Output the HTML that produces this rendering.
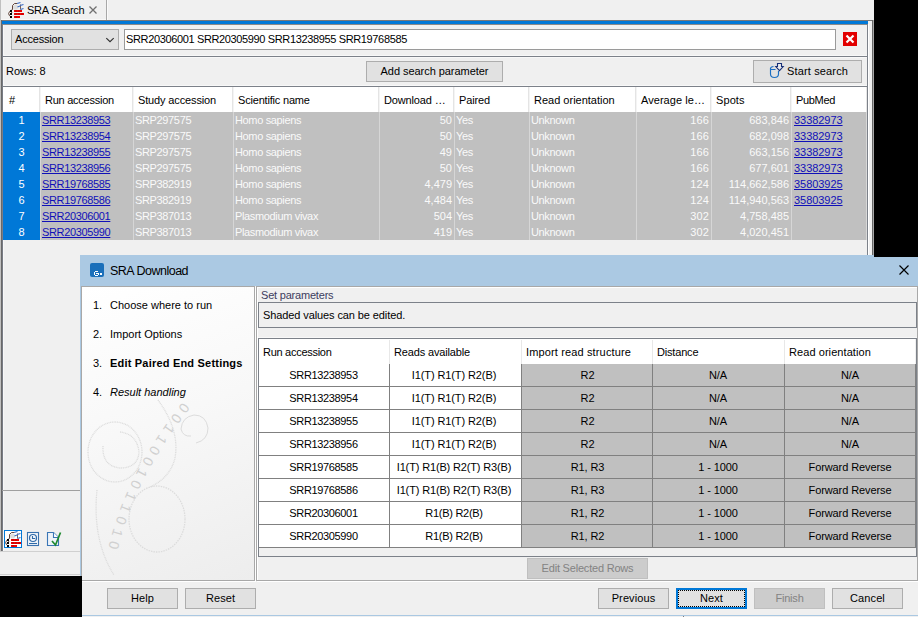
<!DOCTYPE html>
<html><head><meta charset="utf-8">
<style>
*{box-sizing:border-box;margin:0;padding:0}
html,body{width:918px;height:617px;overflow:hidden;background:#f0f0f0;font-family:"Liberation Sans",sans-serif;font-size:11px;color:#000;position:relative}
.a{position:absolute}
.t{position:absolute;white-space:nowrap;line-height:14px}
</style></head><body>
<div class="a" style="left:874px;top:0px;width:44px;height:257px;background:#000;"></div>
<div class="a" style="left:0px;top:576px;width:82px;height:41px;background:#000;"></div>
<div class="a" style="left:683px;top:616px;width:1px;height:1px;background:#808080;"></div>
<div class="a" style="left:0px;top:0px;width:1px;height:551px;background:#c0c0c0;"></div>
<div class="a" style="left:106px;top:0px;width:1px;height:20px;background:#a8a8a8;"></div>
<div class="a" style="left:107px;top:0px;width:1px;height:20px;background:#fafafa;"></div>
<div class="a" style="left:1px;top:19px;width:105px;height:1px;background:#f8f8f8;"></div>
<svg class="a" style="left:0px;top:0px" width="30" height="20" viewBox="0 0 30 20">
<circle cx="15.5" cy="7" r="2.6" fill="#dedede"/>
<path d="M12.5 9.5 Q9.2 11 8.6 13.4 Q8.8 15.6 10.6 16.6 M12.5 9.5 L12.5 5.5 L14.5 3.5 L17 3.5 M12.2 12 Q11 13.5 9.8 14.2" stroke="#5a3b30" stroke-width="0.95" fill="none"/>
<path d="M20.5 4.5 L20.5 9.5" stroke="#5a3b30" stroke-width="0.8"/>
<path d="M17 3.5 L20.5 2.5 M17.5 7 L20 6 M20 5.5 L23.5 4.5 M20.5 9.5 L23.5 8.5" stroke="#3b6cc4" stroke-width="1.2" fill="none"/>
<rect x="10" y="10" width="2" height="2" fill="#000"/><rect x="10" y="13" width="2" height="2" fill="#000"/><rect x="10" y="16" width="2" height="2" fill="#000"/>
<rect x="14" y="10" width="8" height="2" fill="#f00000"/><rect x="14" y="13" width="10" height="2" fill="#f00000"/><rect x="14" y="16" width="6" height="2" fill="#f00000"/>
<path d="M16 10 v2 M19 10 v2 M16 13 v2 M19 13 v2 M22 13 v2 M16 16 v2" stroke="#b00000" stroke-width="1"/>
</svg>
<div class="t" style="left:27px;top:3px;letter-spacing:-0.25px;">SRA Search</div>
<svg class="a" style="left:89px;top:6px" width="8" height="8" viewBox="0 0 8 8"><path d="M0.5 0.5 L7.5 7.5 M7.5 0.5 L0.5 7.5" stroke="#707070" stroke-width="1.3"/></svg>
<div class="a" style="left:1px;top:20px;width:873px;height:1px;background:#787878;"></div>
<div class="a" style="left:2px;top:21px;width:866px;height:3px;background:#0078d7;"></div>
<div class="a" style="left:1px;top:24px;width:867px;height:1px;background:#8a8a8a;"></div>
<div class="a" style="left:1px;top:20px;width:1px;height:531px;background:#696969;"></div>
<div class="a" style="left:2px;top:24px;width:1px;height:527px;background:#787c85;"></div>
<div class="a" style="left:3px;top:25px;width:1px;height:526px;background:#f8f8f8;"></div>
<div class="a" style="left:867px;top:24px;width:1px;height:232px;background:#7c8189;"></div>
<div class="a" style="left:868px;top:21px;width:4px;height:555px;background:#f0f0f0;"></div>
<div class="a" style="left:868px;top:24px;width:1px;height:552px;background:#ffffff;"></div>
<div class="a" style="left:872px;top:20px;width:1px;height:556px;background:#696969;"></div>
<div class="a" style="left:873px;top:20px;width:1px;height:556px;background:#a8a8a8;"></div>
<div class="a" style="left:11px;top:29px;width:108px;height:21px;border:1px solid #adadad;background:#e1e1e1;"></div>
<div class="t" style="left:15px;top:32px;letter-spacing:-0.2px;">Accession</div>
<svg class="a" style="left:105px;top:37px" width="10" height="6" viewBox="0 0 10 6"><path d="M1.3 1.2 L5 4.7 L8.7 1.2" stroke="#303030" stroke-width="1.15" fill="none"/></svg>
<div class="a" style="left:124px;top:29px;width:712px;height:21px;border:1px solid #9a9a9a;background:#fff;"></div>
<div class="t" style="left:126px;top:32px;letter-spacing:-0.36px;">SRR20306001 SRR20305990 SRR13238955 SRR19768585</div>
<div class="a" style="left:843px;top:32px;width:14px;height:14px;background:#e20000;"></div>
<svg class="a" style="left:843px;top:32px" width="14" height="14" viewBox="0 0 14 14"><path d="M3.5 3.5 L10.5 10.5 M10.5 3.5 L3.5 10.5" stroke="#fff" stroke-width="2.2"/></svg>
<div class="a" style="left:3px;top:55px;width:864px;height:1px;background:#f8f8f8;"></div>
<div class="a" style="left:3px;top:56px;width:865px;height:1px;background:#7c8189;"></div>
<div class="a" style="left:3px;top:57px;width:864px;height:1px;background:#f8f8f8;"></div>
<div class="t" style="left:6px;top:64px;">Rows: 8</div>
<div class="a" style="left:366px;top:61px;width:137px;height:21px;border:1px solid #adadad;background:#e1e1e1;"></div>
<div class="t" style="left:366px;top:64px;width:137px;text-align:center;letter-spacing:-0.05px;">Add search parameter</div>
<div class="a" style="left:753px;top:60px;width:109px;height:23px;border:1px solid #adadad;background:#e1e1e1;"></div>
<svg class="a" style="left:768px;top:62px" width="17" height="17" viewBox="0 0 17 17">
<path d="M2.5 6 V12 Q2.5 15.5 6.5 15.5 Q10.5 15.5 10.5 12 V9" stroke="#1b6ec2" stroke-width="1.15" fill="none"/>
<path d="M2.5 6.5 Q2.8 4.6 5.5 4.5 M3 7.5 L7.5 7.5" stroke="#1b6ec2" stroke-width="1.1" fill="none"/>
<path d="M9.5 1.5 H13.5 V4.5 H15.2 L11.5 8.6 L7.8 4.5 H9.5 Z" stroke="#162f78" stroke-width="1.1" fill="#ececec" stroke-linejoin="miter"/>
</svg>
<div class="t" style="left:787px;top:64px;letter-spacing:0.15px;">Start search</div>
<div class="a" style="left:3px;top:85px;width:864px;height:1px;background:#f8f8f8;"></div>
<div class="a" style="left:2px;top:86px;width:866px;height:1px;background:#7c8189;"></div>
<div class="a" style="left:3px;top:87px;width:864px;height:25px;background:#fff;"></div>
<div class="t" style="left:9px;top:93px;letter-spacing:0px;">#</div>
<div class="t" style="left:45px;top:93px;letter-spacing:-0.25px;">Run accession</div>
<div class="a" style="left:39px;top:87px;width:1px;height:25px;background:#e4e4e4;"></div>
<div class="a" style="left:40px;top:87px;width:1px;height:25px;background:#f4f4f4;"></div>
<div class="t" style="left:138px;top:93px;letter-spacing:-0.14px;">Study accession</div>
<div class="a" style="left:132px;top:87px;width:1px;height:25px;background:#e4e4e4;"></div>
<div class="a" style="left:133px;top:87px;width:1px;height:25px;background:#f4f4f4;"></div>
<div class="t" style="left:238px;top:93px;letter-spacing:-0.19px;">Scientific name</div>
<div class="a" style="left:232px;top:87px;width:1px;height:25px;background:#e4e4e4;"></div>
<div class="a" style="left:233px;top:87px;width:1px;height:25px;background:#f4f4f4;"></div>
<div class="t" style="left:384px;top:93px;letter-spacing:-0.14px;">Download &#8230;</div>
<div class="a" style="left:378px;top:87px;width:1px;height:25px;background:#e4e4e4;"></div>
<div class="a" style="left:379px;top:87px;width:1px;height:25px;background:#f4f4f4;"></div>
<div class="t" style="left:459px;top:93px;letter-spacing:-0.13px;">Paired</div>
<div class="a" style="left:453px;top:87px;width:1px;height:25px;background:#e4e4e4;"></div>
<div class="a" style="left:454px;top:87px;width:1px;height:25px;background:#f4f4f4;"></div>
<div class="t" style="left:534px;top:93px;letter-spacing:0px;">Read orientation</div>
<div class="a" style="left:528px;top:87px;width:1px;height:25px;background:#e4e4e4;"></div>
<div class="a" style="left:529px;top:87px;width:1px;height:25px;background:#f4f4f4;"></div>
<div class="t" style="left:641px;top:93px;letter-spacing:0.05px;">Average le&#8230;</div>
<div class="a" style="left:635px;top:87px;width:1px;height:25px;background:#e4e4e4;"></div>
<div class="a" style="left:636px;top:87px;width:1px;height:25px;background:#f4f4f4;"></div>
<div class="t" style="left:716px;top:93px;letter-spacing:0.1px;">Spots</div>
<div class="a" style="left:710px;top:87px;width:1px;height:25px;background:#e4e4e4;"></div>
<div class="a" style="left:711px;top:87px;width:1px;height:25px;background:#f4f4f4;"></div>
<div class="t" style="left:796px;top:93px;letter-spacing:-0.33px;">PubMed</div>
<div class="a" style="left:790px;top:87px;width:1px;height:25px;background:#e4e4e4;"></div>
<div class="a" style="left:791px;top:87px;width:1px;height:25px;background:#f4f4f4;"></div>
<div class="a" style="left:866px;top:87px;width:1px;height:25px;background:#e6e6e6;"></div>
<div class="a" style="left:3px;top:112px;width:37px;height:128px;background:#0078d7;"></div>
<div class="a" style="left:40px;top:112px;width:827px;height:128px;background:#c0c0c0;"></div>
<div class="a" style="left:866px;top:112px;width:1px;height:128px;background:#d8d8d8;"></div>
<div class="a" style="left:40px;top:112px;width:1px;height:128px;background:#d6d6d6;"></div>
<div class="a" style="left:133px;top:112px;width:1px;height:128px;background:#d6d6d6;"></div>
<div class="a" style="left:233px;top:112px;width:1px;height:128px;background:#d6d6d6;"></div>
<div class="a" style="left:379px;top:112px;width:1px;height:128px;background:#d6d6d6;"></div>
<div class="a" style="left:454px;top:112px;width:1px;height:128px;background:#d6d6d6;"></div>
<div class="a" style="left:529px;top:112px;width:1px;height:128px;background:#d6d6d6;"></div>
<div class="a" style="left:636px;top:112px;width:1px;height:128px;background:#d6d6d6;"></div>
<div class="a" style="left:711px;top:112px;width:1px;height:128px;background:#d6d6d6;"></div>
<div class="a" style="left:791px;top:112px;width:1px;height:128px;background:#d6d6d6;"></div>
<div class="t" style="left:3px;top:113px;width:37px;text-align:center;color:#fff;">1</div>
<div class="t" style="left:42px;top:113px;letter-spacing:-0.35px;color:#1010b8;text-decoration:underline;">SRR13238953</div>
<div class="t" style="left:135px;top:113px;letter-spacing:-0.35px;color:#fafafa;">SRP297575</div>
<div class="t" style="left:235px;top:113px;letter-spacing:-0.35px;color:#fafafa;">Homo sapiens</div>
<div class="t" style="left:379px;top:113px;width:73px;text-align:right;letter-spacing:0.0px;color:#fafafa;">50</div>
<div class="t" style="left:456px;top:113px;letter-spacing:-0.35px;color:#fafafa;">Yes</div>
<div class="t" style="left:531px;top:113px;letter-spacing:-0.35px;color:#fafafa;">Unknown</div>
<div class="t" style="left:636px;top:113px;width:73px;text-align:right;letter-spacing:0.15px;color:#fafafa;">166</div>
<div class="t" style="left:711px;top:113px;width:78px;text-align:right;letter-spacing:0.0px;color:#fafafa;">683,846</div>
<div class="t" style="left:794px;top:113px;letter-spacing:-0.05px;color:#1010b8;text-decoration:underline;">33382973</div>
<div class="t" style="left:3px;top:129px;width:37px;text-align:center;color:#fff;">2</div>
<div class="t" style="left:42px;top:129px;letter-spacing:-0.35px;color:#1010b8;text-decoration:underline;">SRR13238954</div>
<div class="t" style="left:135px;top:129px;letter-spacing:-0.35px;color:#fafafa;">SRP297575</div>
<div class="t" style="left:235px;top:129px;letter-spacing:-0.35px;color:#fafafa;">Homo sapiens</div>
<div class="t" style="left:379px;top:129px;width:73px;text-align:right;letter-spacing:0.0px;color:#fafafa;">50</div>
<div class="t" style="left:456px;top:129px;letter-spacing:-0.35px;color:#fafafa;">Yes</div>
<div class="t" style="left:531px;top:129px;letter-spacing:-0.35px;color:#fafafa;">Unknown</div>
<div class="t" style="left:636px;top:129px;width:73px;text-align:right;letter-spacing:0.15px;color:#fafafa;">166</div>
<div class="t" style="left:711px;top:129px;width:78px;text-align:right;letter-spacing:0.0px;color:#fafafa;">682,098</div>
<div class="t" style="left:794px;top:129px;letter-spacing:-0.05px;color:#1010b8;text-decoration:underline;">33382973</div>
<div class="t" style="left:3px;top:145px;width:37px;text-align:center;color:#fff;">3</div>
<div class="t" style="left:42px;top:145px;letter-spacing:-0.35px;color:#1010b8;text-decoration:underline;">SRR13238955</div>
<div class="t" style="left:135px;top:145px;letter-spacing:-0.35px;color:#fafafa;">SRP297575</div>
<div class="t" style="left:235px;top:145px;letter-spacing:-0.35px;color:#fafafa;">Homo sapiens</div>
<div class="t" style="left:379px;top:145px;width:73px;text-align:right;letter-spacing:0.0px;color:#fafafa;">49</div>
<div class="t" style="left:456px;top:145px;letter-spacing:-0.35px;color:#fafafa;">Yes</div>
<div class="t" style="left:531px;top:145px;letter-spacing:-0.35px;color:#fafafa;">Unknown</div>
<div class="t" style="left:636px;top:145px;width:73px;text-align:right;letter-spacing:0.15px;color:#fafafa;">166</div>
<div class="t" style="left:711px;top:145px;width:78px;text-align:right;letter-spacing:0.0px;color:#fafafa;">663,156</div>
<div class="t" style="left:794px;top:145px;letter-spacing:-0.05px;color:#1010b8;text-decoration:underline;">33382973</div>
<div class="t" style="left:3px;top:161px;width:37px;text-align:center;color:#fff;">4</div>
<div class="t" style="left:42px;top:161px;letter-spacing:-0.35px;color:#1010b8;text-decoration:underline;">SRR13238956</div>
<div class="t" style="left:135px;top:161px;letter-spacing:-0.35px;color:#fafafa;">SRP297575</div>
<div class="t" style="left:235px;top:161px;letter-spacing:-0.35px;color:#fafafa;">Homo sapiens</div>
<div class="t" style="left:379px;top:161px;width:73px;text-align:right;letter-spacing:0.0px;color:#fafafa;">50</div>
<div class="t" style="left:456px;top:161px;letter-spacing:-0.35px;color:#fafafa;">Yes</div>
<div class="t" style="left:531px;top:161px;letter-spacing:-0.35px;color:#fafafa;">Unknown</div>
<div class="t" style="left:636px;top:161px;width:73px;text-align:right;letter-spacing:0.15px;color:#fafafa;">166</div>
<div class="t" style="left:711px;top:161px;width:78px;text-align:right;letter-spacing:0.0px;color:#fafafa;">677,601</div>
<div class="t" style="left:794px;top:161px;letter-spacing:-0.05px;color:#1010b8;text-decoration:underline;">33382973</div>
<div class="t" style="left:3px;top:177px;width:37px;text-align:center;color:#fff;">5</div>
<div class="t" style="left:42px;top:177px;letter-spacing:-0.35px;color:#1010b8;text-decoration:underline;">SRR19768585</div>
<div class="t" style="left:135px;top:177px;letter-spacing:-0.35px;color:#fafafa;">SRP382919</div>
<div class="t" style="left:235px;top:177px;letter-spacing:-0.35px;color:#fafafa;">Homo sapiens</div>
<div class="t" style="left:379px;top:177px;width:73px;text-align:right;letter-spacing:0.0px;color:#fafafa;">4,479</div>
<div class="t" style="left:456px;top:177px;letter-spacing:-0.35px;color:#fafafa;">Yes</div>
<div class="t" style="left:531px;top:177px;letter-spacing:-0.35px;color:#fafafa;">Unknown</div>
<div class="t" style="left:636px;top:177px;width:73px;text-align:right;letter-spacing:0.15px;color:#fafafa;">124</div>
<div class="t" style="left:711px;top:177px;width:78px;text-align:right;letter-spacing:0.0px;color:#fafafa;">114,662,586</div>
<div class="t" style="left:794px;top:177px;letter-spacing:-0.05px;color:#1010b8;text-decoration:underline;">35803925</div>
<div class="t" style="left:3px;top:193px;width:37px;text-align:center;color:#fff;">6</div>
<div class="t" style="left:42px;top:193px;letter-spacing:-0.35px;color:#1010b8;text-decoration:underline;">SRR19768586</div>
<div class="t" style="left:135px;top:193px;letter-spacing:-0.35px;color:#fafafa;">SRP382919</div>
<div class="t" style="left:235px;top:193px;letter-spacing:-0.35px;color:#fafafa;">Homo sapiens</div>
<div class="t" style="left:379px;top:193px;width:73px;text-align:right;letter-spacing:0.0px;color:#fafafa;">4,484</div>
<div class="t" style="left:456px;top:193px;letter-spacing:-0.35px;color:#fafafa;">Yes</div>
<div class="t" style="left:531px;top:193px;letter-spacing:-0.35px;color:#fafafa;">Unknown</div>
<div class="t" style="left:636px;top:193px;width:73px;text-align:right;letter-spacing:0.15px;color:#fafafa;">124</div>
<div class="t" style="left:711px;top:193px;width:78px;text-align:right;letter-spacing:0.0px;color:#fafafa;">114,940,563</div>
<div class="t" style="left:794px;top:193px;letter-spacing:-0.05px;color:#1010b8;text-decoration:underline;">35803925</div>
<div class="t" style="left:3px;top:209px;width:37px;text-align:center;color:#fff;">7</div>
<div class="t" style="left:42px;top:209px;letter-spacing:-0.35px;color:#1010b8;text-decoration:underline;">SRR20306001</div>
<div class="t" style="left:135px;top:209px;letter-spacing:-0.35px;color:#fafafa;">SRP387013</div>
<div class="t" style="left:235px;top:209px;letter-spacing:-0.35px;color:#fafafa;">Plasmodium vivax</div>
<div class="t" style="left:379px;top:209px;width:73px;text-align:right;letter-spacing:0.0px;color:#fafafa;">504</div>
<div class="t" style="left:456px;top:209px;letter-spacing:-0.35px;color:#fafafa;">Yes</div>
<div class="t" style="left:531px;top:209px;letter-spacing:-0.35px;color:#fafafa;">Unknown</div>
<div class="t" style="left:636px;top:209px;width:73px;text-align:right;letter-spacing:0.15px;color:#fafafa;">302</div>
<div class="t" style="left:711px;top:209px;width:78px;text-align:right;letter-spacing:0.0px;color:#fafafa;">4,758,485</div>
<div class="t" style="left:3px;top:225px;width:37px;text-align:center;color:#fff;">8</div>
<div class="t" style="left:42px;top:225px;letter-spacing:-0.35px;color:#1010b8;text-decoration:underline;">SRR20305990</div>
<div class="t" style="left:135px;top:225px;letter-spacing:-0.35px;color:#fafafa;">SRP387013</div>
<div class="t" style="left:235px;top:225px;letter-spacing:-0.35px;color:#fafafa;">Plasmodium vivax</div>
<div class="t" style="left:379px;top:225px;width:73px;text-align:right;letter-spacing:0.0px;color:#fafafa;">419</div>
<div class="t" style="left:456px;top:225px;letter-spacing:-0.35px;color:#fafafa;">Yes</div>
<div class="t" style="left:531px;top:225px;letter-spacing:-0.35px;color:#fafafa;">Unknown</div>
<div class="t" style="left:636px;top:225px;width:73px;text-align:right;letter-spacing:0.15px;color:#fafafa;">302</div>
<div class="t" style="left:711px;top:225px;width:78px;text-align:right;letter-spacing:0.0px;color:#fafafa;">4,020,451</div>
<div class="a" style="left:2px;top:490px;width:866px;height:1px;background:#a0a0a0;"></div>
<div class="a" style="left:0px;top:551px;width:80px;height:1px;background:#d0d0d0;"></div>
<div class="a" style="left:0px;top:574px;width:80px;height:1px;background:#d0d0d0;"></div>
<div class="a" style="left:4px;top:530px;width:18px;height:18px;background:#0078d7;"></div>
<div class="a" style="left:5px;top:531px;width:16px;height:16px;background:#ffffff;"></div>
<svg class="a" style="left:-3px;top:529px" width="30" height="20" viewBox="0 0 30 20">
<circle cx="15.5" cy="7" r="2.6" fill="#dedede"/>
<path d="M12.5 9.5 Q9.2 11 8.6 13.4 Q8.8 15.6 10.6 16.6 M12.5 9.5 L12.5 5.5 L14.5 3.5 L17 3.5 M12.2 12 Q11 13.5 9.8 14.2" stroke="#5a3b30" stroke-width="0.95" fill="none"/>
<path d="M20.5 4.5 L20.5 9.5" stroke="#5a3b30" stroke-width="0.8"/>
<path d="M17 3.5 L20.5 2.5 M17.5 7 L20 6 M20 5.5 L23.5 4.5 M20.5 9.5 L23.5 8.5" stroke="#3b6cc4" stroke-width="1.2" fill="none"/>
<rect x="10" y="10" width="2" height="2" fill="#000"/><rect x="10" y="13" width="2" height="2" fill="#000"/><rect x="10" y="16" width="2" height="2" fill="#000"/>
<rect x="14" y="10" width="8" height="2" fill="#f00000"/><rect x="14" y="13" width="10" height="2" fill="#f00000"/><rect x="14" y="16" width="6" height="2" fill="#f00000"/>
<path d="M16 10 v2 M19 10 v2 M16 13 v2 M19 13 v2 M22 13 v2 M16 16 v2" stroke="#b00000" stroke-width="1"/>
</svg>
<svg class="a" style="left:26px;top:531px" width="40" height="17" viewBox="26 531 40 17">
<rect x="27.5" y="532.5" width="11" height="13" fill="#f4f7fb" stroke="#3a72ae" stroke-width="1.1"/>
<circle cx="33" cy="538" r="3.5" fill="none" stroke="#2f6aa8" stroke-width="1.2"/>
<path d="M32.5 536 V538.5 H35.2" stroke="#2f6aa8" stroke-width="1.1" fill="none"/>
<path d="M29 543.5 H37" stroke="#2f6aa8" stroke-width="1.1"/>
<path d="M47.5 532.5 H53.5 L58.5 537.5 V545.5 H47.5 Z" fill="#eef3f9" stroke="#3a76b6" stroke-width="1.1"/>
<path d="M53.5 532.5 V537.5 H58.5" fill="#fff" stroke="#3a76b6" stroke-width="1.1"/>
<path d="M52 541 L55.5 545 L60.5 532.5" fill="none" stroke="#1f8a30" stroke-width="1.7"/>
</svg>
<div class="a" style="left:80px;top:255px;width:794px;height:362px;background:#f0f0f0;"></div>
<div class="a" style="left:80px;top:255px;width:794px;height:31px;background:#abc9e3;"></div>
<div class="a" style="left:874px;top:257px;width:44px;height:360px;background:#f0f0f0;"></div>
<div class="a" style="left:874px;top:257px;width:44px;height:29px;background:#abc9e3;"></div>
<div class="a" style="left:80px;top:286px;width:1px;height:331px;background:#aac8e2;"></div>
<div class="a" style="left:90px;top:263px;width:14px;height:14px;background:#1a6fba;border-radius:2px"></div>
<svg class="a" style="left:90px;top:263px" width="14" height="14" viewBox="0 0 14 14" shape-rendering="crispEdges" fill="#fff"><rect x="4" y="9" width="1" height="3"/><rect x="5" y="8" width="3" height="1"/><rect x="5" y="12" width="3" height="1"/><rect x="8" y="10" width="1" height="2"/><rect x="6" y="10" width="2" height="1"/><rect x="10" y="10" width="2" height="2"/></svg>
<div class="t" style="left:110px;top:264px;letter-spacing:-0.5px;font-size:12.5px;">SRA Download</div>
<svg class="a" style="left:899px;top:265px" width="10" height="10" viewBox="0 0 10 10"><path d="M0.5 0.5 L9.5 9.5 M9.5 0.5 L0.5 9.5" stroke="#000" stroke-width="1.15"/></svg>
<div class="a" style="left:82px;top:287px;width:174px;height:295px;border:1px solid #fff"></div>
<div class="a" style="left:81px;top:286px;width:174px;height:295px;border:1px solid #a8a8a8;background:linear-gradient(160deg,#ffffff 0%,#f8f8f8 45%,#ededed 100%)"></div>
<svg class="a" style="left:82px;top:287px" width="172" height="293" viewBox="82 287 172 293">
<g fill="none" stroke="#dcdcdc" stroke-width="1.3" stroke-dasharray="1 0.7">
<ellipse cx="115" cy="452" rx="27" ry="30"/>
<path d="M103 446 Q102 466 120 468 Q138 468 139 452 Q137 434 120 432"/>
<path d="M158 400 Q180 430 175 458 Q170 478 150 487"/>
<path d="M97 490 Q92 540 114 575"/>
<ellipse cx="157" cy="519" rx="28" ry="33" stroke-dasharray="1.5 1"/>
</g>
<g fill="none" stroke="#dcdcdc" stroke-width="1">
<path d="M196 443 Q208 440 208 428 Q206 415 194 415 Q182 417 181 429 Q183 437 191 436"/>
</g>
<g font-family="Liberation Sans" font-size="14" fill="#d0d0d0"><text x="184.1" y="408.2" transform="rotate(127.2 184.1 408.2)" text-anchor="middle" dy="5">0</text><text x="176.4" y="418.5" transform="rotate(126.1 176.4 418.5)" text-anchor="middle" dy="5">0</text><text x="168.8" y="429.0" transform="rotate(124.8 168.8 429.0)" text-anchor="middle" dy="5">1</text><text x="161.6" y="439.7" transform="rotate(123.3 161.6 439.7)" text-anchor="middle" dy="5">1</text><text x="154.7" y="450.6" transform="rotate(121.6 154.7 450.6)" text-anchor="middle" dy="5">0</text><text x="148.1" y="461.7" transform="rotate(119.8 148.1 461.7)" text-anchor="middle" dy="5">0</text><text x="141.8" y="473.0" transform="rotate(117.8 141.8 473.0)" text-anchor="middle" dy="5">1</text><text x="136.0" y="484.6" transform="rotate(115.6 136.0 484.6)" text-anchor="middle" dy="5">0</text><text x="130.7" y="496.4" transform="rotate(113.4 130.7 496.4)" text-anchor="middle" dy="5">1</text><text x="125.8" y="508.3" transform="rotate(111.0 125.8 508.3)" text-anchor="middle" dy="5">1</text><text x="121.4" y="520.5" transform="rotate(108.6 121.4 520.5)" text-anchor="middle" dy="5">0</text><text x="117.5" y="532.8" transform="rotate(106.2 117.5 532.8)" text-anchor="middle" dy="5">1</text><text x="114.2" y="545.3" transform="rotate(103.7 114.2 545.3)" text-anchor="middle" dy="5">0</text></g>
</svg>
<div class="t" style="left:93px;top:298px;">1.</div>
<div class="t" style="left:110px;top:298px;">Choose where to run</div>
<div class="t" style="left:93px;top:327px;">2.</div>
<div class="t" style="left:110px;top:327px;">Import Options</div>
<div class="t" style="left:93px;top:356px;">3.</div>
<div class="t" style="left:110px;top:356px;letter-spacing:0.2px;font-weight:bold;">Edit Paired End Settings</div>
<div class="t" style="left:93px;top:385px;">4.</div>
<div class="t" style="left:110px;top:385px;font-style:italic;">Result handling</div>
<div class="a" style="left:257px;top:287px;width:662px;height:295px;border:1px solid #fff"></div>
<div class="a" style="left:256px;top:286px;width:662px;height:295px;border:1px solid #a8a8a8"></div>
<div class="t" style="left:261px;top:288px;letter-spacing:-0.2px;color:#3c3c5e;">Set parameters</div>
<div class="a" style="left:258px;top:302px;width:659px;height:26px;border:1px solid #7c8189;background:#f0f0f0;"></div>
<div class="t" style="left:263px;top:308px;letter-spacing:-0.1px;">Shaded values can be edited.</div>
<div class="a" style="left:258px;top:337px;width:659px;height:1px;background:#f8f8f8;"></div>
<div class="a" style="left:258px;top:338px;width:659px;height:219px;border:1px solid #7c8189;background:#f0f0f0;"></div>
<div class="a" style="left:259px;top:339px;width:656px;height:25px;background:#fff;"></div>
<div class="a" style="left:259px;top:364px;width:263px;height:184px;background:#fff;"></div>
<div class="a" style="left:522px;top:364px;width:393px;height:184px;background:#c0c0c0;"></div>
<div class="t" style="left:263px;top:345px;letter-spacing:-0.28px;">Run accession</div>
<div class="t" style="left:394px;top:345px;letter-spacing:-0.15px;">Reads available</div>
<div class="a" style="left:389px;top:340px;width:1px;height:24px;background:#e8e8e8;"></div>
<div class="a" style="left:389px;top:364px;width:1px;height:184px;background:#808080;"></div>
<div class="t" style="left:526px;top:345px;letter-spacing:0.14px;">Import read structure</div>
<div class="a" style="left:521px;top:340px;width:1px;height:24px;background:#e8e8e8;"></div>
<div class="a" style="left:521px;top:364px;width:1px;height:184px;background:#808080;"></div>
<div class="t" style="left:657px;top:345px;letter-spacing:-0.18px;">Distance</div>
<div class="a" style="left:652px;top:340px;width:1px;height:24px;background:#e8e8e8;"></div>
<div class="a" style="left:652px;top:364px;width:1px;height:184px;background:#808080;"></div>
<div class="t" style="left:789px;top:345px;letter-spacing:0.07px;">Read orientation</div>
<div class="a" style="left:784px;top:340px;width:1px;height:24px;background:#e8e8e8;"></div>
<div class="a" style="left:784px;top:364px;width:1px;height:184px;background:#808080;"></div>
<div class="a" style="left:259px;top:386px;width:656px;height:1px;background:#808080;"></div>
<div class="a" style="left:259px;top:409px;width:656px;height:1px;background:#808080;"></div>
<div class="a" style="left:259px;top:432px;width:656px;height:1px;background:#808080;"></div>
<div class="a" style="left:259px;top:455px;width:656px;height:1px;background:#808080;"></div>
<div class="a" style="left:259px;top:478px;width:656px;height:1px;background:#808080;"></div>
<div class="a" style="left:259px;top:501px;width:656px;height:1px;background:#808080;"></div>
<div class="a" style="left:259px;top:524px;width:656px;height:1px;background:#808080;"></div>
<div class="a" style="left:259px;top:547px;width:656px;height:1px;background:#808080;"></div>
<div class="a" style="left:915px;top:364px;width:1px;height:184px;background:#808080;"></div>
<div class="t" style="left:258px;top:368px;width:131px;text-align:center;letter-spacing:-0.35px;">SRR13238953</div>
<div class="t" style="left:388px;top:368px;width:132px;text-align:center;letter-spacing:-0.1px;">I1(T) R1(T) R2(B)</div>
<div class="t" style="left:522px;top:368px;width:131px;text-align:center;letter-spacing:-0.1px;">R2</div>
<div class="t" style="left:652px;top:368px;width:132px;text-align:center;letter-spacing:-0.1px;">N/A</div>
<div class="t" style="left:785px;top:368px;width:130px;text-align:center;letter-spacing:-0.1px;">N/A</div>
<div class="t" style="left:258px;top:391px;width:131px;text-align:center;letter-spacing:-0.35px;">SRR13238954</div>
<div class="t" style="left:388px;top:391px;width:132px;text-align:center;letter-spacing:-0.1px;">I1(T) R1(T) R2(B)</div>
<div class="t" style="left:522px;top:391px;width:131px;text-align:center;letter-spacing:-0.1px;">R2</div>
<div class="t" style="left:652px;top:391px;width:132px;text-align:center;letter-spacing:-0.1px;">N/A</div>
<div class="t" style="left:785px;top:391px;width:130px;text-align:center;letter-spacing:-0.1px;">N/A</div>
<div class="t" style="left:258px;top:414px;width:131px;text-align:center;letter-spacing:-0.35px;">SRR13238955</div>
<div class="t" style="left:388px;top:414px;width:132px;text-align:center;letter-spacing:-0.1px;">I1(T) R1(T) R2(B)</div>
<div class="t" style="left:522px;top:414px;width:131px;text-align:center;letter-spacing:-0.1px;">R2</div>
<div class="t" style="left:652px;top:414px;width:132px;text-align:center;letter-spacing:-0.1px;">N/A</div>
<div class="t" style="left:785px;top:414px;width:130px;text-align:center;letter-spacing:-0.1px;">N/A</div>
<div class="t" style="left:258px;top:437px;width:131px;text-align:center;letter-spacing:-0.35px;">SRR13238956</div>
<div class="t" style="left:388px;top:437px;width:132px;text-align:center;letter-spacing:-0.1px;">I1(T) R1(T) R2(B)</div>
<div class="t" style="left:522px;top:437px;width:131px;text-align:center;letter-spacing:-0.1px;">R2</div>
<div class="t" style="left:652px;top:437px;width:132px;text-align:center;letter-spacing:-0.1px;">N/A</div>
<div class="t" style="left:785px;top:437px;width:130px;text-align:center;letter-spacing:-0.1px;">N/A</div>
<div class="t" style="left:258px;top:460px;width:131px;text-align:center;letter-spacing:-0.35px;">SRR19768585</div>
<div class="t" style="left:388px;top:460px;width:132px;text-align:center;letter-spacing:-0.15px;">I1(T) R1(B) R2(T) R3(B)</div>
<div class="t" style="left:522px;top:460px;width:131px;text-align:center;letter-spacing:-0.1px;">R1, R3</div>
<div class="t" style="left:652px;top:460px;width:132px;text-align:center;letter-spacing:-0.1px;">1 - 1000</div>
<div class="t" style="left:785px;top:460px;width:130px;text-align:center;letter-spacing:-0.1px;">Forward Reverse</div>
<div class="t" style="left:258px;top:483px;width:131px;text-align:center;letter-spacing:-0.35px;">SRR19768586</div>
<div class="t" style="left:388px;top:483px;width:132px;text-align:center;letter-spacing:-0.15px;">I1(T) R1(B) R2(T) R3(B)</div>
<div class="t" style="left:522px;top:483px;width:131px;text-align:center;letter-spacing:-0.1px;">R1, R3</div>
<div class="t" style="left:652px;top:483px;width:132px;text-align:center;letter-spacing:-0.1px;">1 - 1000</div>
<div class="t" style="left:785px;top:483px;width:130px;text-align:center;letter-spacing:-0.1px;">Forward Reverse</div>
<div class="t" style="left:258px;top:506px;width:131px;text-align:center;letter-spacing:-0.35px;">SRR20306001</div>
<div class="t" style="left:388px;top:506px;width:132px;text-align:center;letter-spacing:-0.28px;">R1(B) R2(B)</div>
<div class="t" style="left:522px;top:506px;width:131px;text-align:center;letter-spacing:-0.1px;">R1, R2</div>
<div class="t" style="left:652px;top:506px;width:132px;text-align:center;letter-spacing:-0.1px;">1 - 1000</div>
<div class="t" style="left:785px;top:506px;width:130px;text-align:center;letter-spacing:-0.1px;">Forward Reverse</div>
<div class="t" style="left:258px;top:529px;width:131px;text-align:center;letter-spacing:-0.35px;">SRR20305990</div>
<div class="t" style="left:388px;top:529px;width:132px;text-align:center;letter-spacing:-0.28px;">R1(B) R2(B)</div>
<div class="t" style="left:522px;top:529px;width:131px;text-align:center;letter-spacing:-0.1px;">R1, R2</div>
<div class="t" style="left:652px;top:529px;width:132px;text-align:center;letter-spacing:-0.1px;">1 - 1000</div>
<div class="t" style="left:785px;top:529px;width:130px;text-align:center;letter-spacing:-0.1px;">Forward Reverse</div>
<div class="a" style="left:527px;top:558px;width:121px;height:21px;border:1px solid #bfbfbf;background:#cccccc;"></div>
<div class="t" style="left:527px;top:561px;width:121px;text-align:center;letter-spacing:-0.2px;color:#838383;">Edit Selected Rows</div>
<div class="a" style="left:107px;top:588px;width:71px;height:21px;border:1px solid #adadad;background:#e1e1e1;"></div>
<div class="t" style="left:107px;top:591px;width:71px;text-align:center;letter-spacing:0.1px;">Help</div>
<div class="a" style="left:185px;top:588px;width:71px;height:21px;border:1px solid #adadad;background:#e1e1e1;"></div>
<div class="t" style="left:185px;top:591px;width:71px;text-align:center;letter-spacing:0.1px;">Reset</div>
<div class="a" style="left:598px;top:588px;width:71px;height:21px;border:1px solid #adadad;background:#e1e1e1;"></div>
<div class="t" style="left:598px;top:591px;width:71px;text-align:center;letter-spacing:0.1px;">Previous</div>
<div class="a" style="left:676px;top:588px;width:71px;height:21px;border:2px solid #0078d7;background:#e1e1e1"></div>
<div class="a" style="left:678px;top:590px;width:67px;height:17px;border:1px dotted #000"></div>
<div class="t" style="left:676px;top:591px;width:71px;text-align:center;letter-spacing:0.1px;">Next</div>
<div class="a" style="left:754px;top:588px;width:71px;height:21px;border:1px solid #bfbfbf;background:#cccccc;"></div>
<div class="t" style="left:754px;top:591px;width:71px;text-align:center;letter-spacing:-0.2px;color:#838383;">Finish</div>
<div class="a" style="left:832px;top:588px;width:71px;height:21px;border:1px solid #adadad;background:#e1e1e1;"></div>
<div class="t" style="left:832px;top:591px;width:71px;text-align:center;letter-spacing:0.1px;">Cancel</div>
<div class="a" style="left:81px;top:615px;width:837px;height:1px;background:#aac8e2;"></div>
<div class="a" style="left:0px;top:576px;width:82px;height:41px;background:#000;"></div>
<div class="a" style="left:683px;top:616px;width:1px;height:1px;background:#808080;"></div>
</body></html>
